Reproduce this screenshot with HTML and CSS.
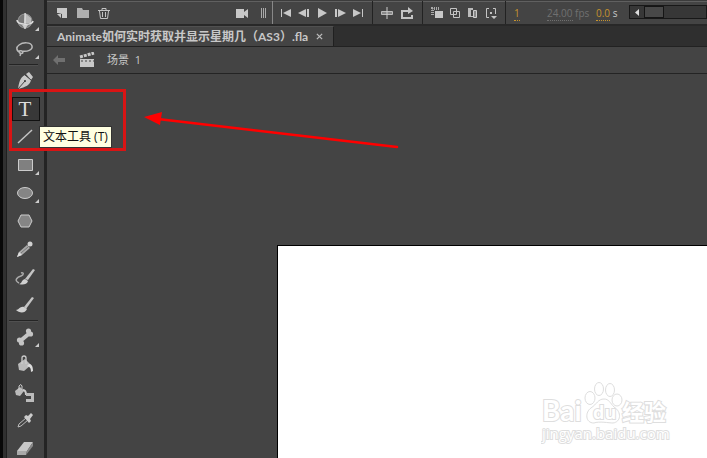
FILE: index.html
```html
<!DOCTYPE html>
<html lang="zh-CN">
<head>
<meta charset="utf-8">
<title>Animate</title>
<link rel="stylesheet" href="styles.css">
</head>
<body>
<div class="app">
  <nav class="tools" aria-label="工具">
    <button class="tool more" aria-label="3D 旋转工具"><svg viewBox="0 0 20 20"><circle cx="10" cy="10" r="7" fill="#777" stroke="#999"/><path d="M10 2l6 5v5H9z" fill="#bbb"/><path d="M10 2v16" stroke="#eee"/><path d="M2 9c0 5 16 6 16 1" fill="none" stroke="#ddd" stroke-width="1.500"/><path d="M7 14h6l-3 4z" fill="#ccc"/></svg></button>
    <button class="tool more" aria-label="套索工具"><svg viewBox="0 0 20 20" fill="none" stroke="#bbb" stroke-width="1.500"><path d="M5 13C1 12 1 8 4 6c4-3 12-3 13 1s-5 6-10 5c-3-1-4 1-2 2s4 0 2-2M5 14q1 1 0 3"/></svg></button>
    <hr>
    <button class="tool" aria-label="钢笔工具"><svg viewBox="0 0 20 20"><path d="M11 3l3-2 4 5-2 3zM10 4l6 5c-1 5-5 7-13 9C4 12 5 6 10 4z" fill="#c8c8c8"/><path d="M3 18l7-8M10 4l6 5" fill="none" stroke="#444"/><circle cx="10" cy="10" r="1" fill="#333"/></svg></button>
    <button class="tool selected" aria-label="文本工具 (T)"><span class="letter">T</span></button>
    <button class="tool" aria-label="线条工具"><svg viewBox="0 0 20 20"><path d="M3 16L17 3" stroke="#c4c4c4" stroke-width="1.500"/></svg></button>
    <button class="tool more" aria-label="矩形工具"><svg viewBox="0 0 20 20"><path d="M3.500 4.500h14v11h-14z" fill="#808080" stroke="#ccc"/></svg></button>
    <button class="tool more" aria-label="椭圆工具"><svg viewBox="0 0 20 20"><ellipse cx="10" cy="10" rx="7.500" ry="5.500" fill="#858585" stroke="#ccc"/></svg></button>
    <button class="tool" aria-label="多角星形工具"><svg viewBox="0 0 20 20"><path d="M6 4h8l3 6-3 6H6l-3-6z" fill="#858585" stroke="#ccc"/></svg></button>
    <button class="tool" aria-label="铅笔工具"><svg viewBox="0 0 20 20"><path d="M2 18l2-5 8-7 3 3-8 7z" fill="#aaa"/><path d="M2 18l2-5 3 3z" fill="#ddd"/><circle cx="15" cy="5" r="2.500" fill="#d0d0d0"/><path d="M6 14l7-6" stroke="#777"/></svg></button>
    <button class="tool" aria-label="画笔工具"><svg viewBox="0 0 20 20"><path d="M10 12l8-10 2 1-7 10z" fill="#c4c4c4"/><path d="M4 17c3 0 2-4 6-5l3 2c-1 4-6 4-9 3z" fill="#d0d0d0"/><path d="M4 16c-6-3-1-6 2-7s3-4 0-3" fill="none" stroke="#aaa" stroke-width="1.500"/></svg></button>
    <button class="tool" aria-label="刷子工具"><svg viewBox="0 0 20 20"><path d="M9 12l8-10 2 1-8 11z" fill="#c4c4c4"/><path d="M1 15c3 0 4-4 8-3l3 2c-2 5-8 4-11 1z" fill="#d0d0d0"/></svg></button>
    <hr>
    <button class="tool more" aria-label="骨骼工具"><svg viewBox="0 0 20 20"><path d="M4 15L16 5" stroke="#c4c4c4" stroke-width="4"/><g fill="#c4c4c4"><circle cx="4.500" cy="13" r="2.600"/><circle cx="6.500" cy="16" r="2.600"/><circle cx="13.500" cy="4" r="2.600"/><circle cx="15.500" cy="7" r="2.600"/></g></svg></button>
    <button class="tool" aria-label="颜料桶工具"><svg viewBox="0 0 20 20"><path d="M3 9l7-5 6 6-7 6-5-1z" fill="#bbb"/><path d="M14 9c3 0 4 3 4 7l-2 1c0-4-1-5-4-6z" fill="#ddd"/><path d="M7 9V3q0-2 2-2t2 2v6" fill="none" stroke="#ccc" stroke-width="1.300"/></svg></button>
    <button class="tool" aria-label="墨水瓶工具"><svg viewBox="0 0 20 20"><path d="M0 8l5-4 4 4-4 5-4-1z" fill="#bbb"/><path d="M8 7q3 0 3 5" fill="none" stroke="#ccc" stroke-width="2"/><path d="M4 7V3q2-3 3 0v4" fill="none" stroke="#ccc"/><path d="M11 10h8v9h-8v-3h5v-3h-5z" fill="#bbb"/></svg></button>
    <button class="tool" aria-label="滴管工具"><svg viewBox="0 0 20 20"><path d="M3 16l1-3 7-6 2 2-7 6z" fill="none" stroke="#bbb"/><path d="M9 6l2-2 2 1 3-3 2 2-3 4 1 2-2 2z" fill="#ccc"/></svg></button>
    <button class="tool" aria-label="橡皮擦工具"><svg viewBox="0 0 20 20"><path d="M2 12l7-9h9l-6 9z" fill="#c8c8c8"/><path d="M2 12h10l-1 4H2z" fill="#aaa"/><path d="M12 12l6-9v4l-7 9z" fill="#888"/></svg></button>
  </nav>
  <main class="workspace">
    <section class="timeline" aria-label="时间轴">
      <div class="group layers">
        <button aria-label="新建图层"><svg viewBox="0 0 14 14"><path d="M2 2h10v10H7V8L3 7H2z" fill="#c8c8c8"/><path d="M2 8l4 4V8z" fill="#c8c8c8"/></svg></button>
        <button aria-label="新建文件夹"><svg viewBox="0 0 14 14"><path d="M1 2h5l1 2h6v8H1z" fill="#b0b0b0"/></svg></button>
        <button aria-label="删除"><svg viewBox="0 0 14 14" fill="none" stroke="#c4c4c4"><path d="M1 4.500h12M5 4V2.500h4V4M2.500 5l1 7.500h7l1-7.500M5.500 6v5M8.500 6v5"/></svg></button>
      </div>
      <div class="group camera">
        <button aria-label="摄像头"><svg viewBox="0 0 14 14"><path d="M1 3h8v3l4-3v9L9 9v3H1z" fill="#c8c8c8"/></svg></button>
        <span class="grip"></span>
      </div>
      <div class="group playback">
        <button aria-label="第一帧"><svg viewBox="0 0 14 14" fill="#c8c8c8"><path d="M2 3h1v8H2zM4 7l8-4v8z"/></svg></button>
        <button aria-label="后退一帧"><svg viewBox="0 0 14 14" fill="#c8c8c8"><path d="M1 7l8-4v8zM10 3h2v8h-2z"/></svg></button>
        <button aria-label="播放"><svg viewBox="0 0 14 14" fill="#c8c8c8"><path d="M3 2l9 5-9 5z"/></svg></button>
        <button aria-label="前进一帧"><svg viewBox="0 0 14 14" fill="#c8c8c8"><path d="M2 3h2v8H2zM5 3l8 4-8 4z"/></svg></button>
        <button aria-label="最后一帧"><svg viewBox="0 0 14 14" fill="#c8c8c8"><path d="M2 3l8 4-8 4zM11 3h1v8h-1z"/></svg></button>
      </div>
      <div class="group loop">
        <button aria-label="帧居中"><svg viewBox="0 0 14 14"><path d="M1.500 5.500h11v3h-11z" fill="#888" stroke="#bbb"/><path d="M7 1v12" stroke="#ccc"/></svg></button>
        <button aria-label="循环"><svg viewBox="0 0 14 14"><path d="M1 4h7V1l5 4-5 3V6H3v5h8V9h2v4H1z" fill="#c4c4c4"/></svg></button>
      </div>
      <div class="group onion">
        <button aria-label="绘图纸外观"><svg viewBox="0 0 14 14"><path d="M2.500 9V2.500H9" fill="none" stroke="#aaa" stroke-width="3" stroke-dasharray="1 1"/><path d="M5 5h8v7H5z" fill="#c8c8c8"/></svg></button>
        <button aria-label="绘图纸外观轮廓"><svg viewBox="0 0 14 14" fill="none" stroke="#c4c4c4"><path d="M2.500 2.500h6v6h-6zM5.500 5.500h6v6h-6z"/></svg></button>
        <button aria-label="编辑多个帧"><svg viewBox="0 0 14 14"><path d="M2 2h5v2H5v6h2v1H2z" fill="#bbb"/><path d="M7.500 4.500h3v7h-3z" fill="#888" stroke="#ccc"/></svg></button>
        <button aria-label="修改标记"><svg viewBox="0 0 14 14"><path d="M5 2.500H2.500v9H5M9 2.500h2.500V8" fill="none" stroke="#c4c4c4"/><path d="M6 6h2v2H6zM7 10h6l-3 3z" fill="#c4c4c4"/></svg></button>
      </div>
      <div class="group readout"><a href="#" class="frame"><span class="value">1</span></a><span class="rate"><span class="value">24.00</span> fps</span><span class="time"><a href="#" class="value">0.0</a> s</span></div>
      <div class="scroll"><button aria-label="向左滚动"><svg viewBox="0 0 14 14"><path d="M9 3v7L5 6.500z" fill="#ddd"/></svg></button><span class="thumb"></span></div>
    </section>
    <div class="tabs"><div class="tab"><span>Animate如何实时获取并显示星期几（AS3）.fla</span><button aria-label="关闭"><svg viewBox="0 0 8 8"><path d="M1 1l6 6M7 1L1 7" stroke="#bbb" stroke-width="1.500"/></svg></button></div></div>
    <div class="scene">
      <button aria-label="返回"><svg viewBox="0 0 16 16"><path d="M2 8l5-5v3h7v4H7v3z" fill="#707070"/></svg></button>
      <svg class="clapper" viewBox="0 0 16 16"><path d="M1 7h14v8H1z" fill="#c8c8c8"/><path d="M1 5l14-4" stroke="#c8c8c8" stroke-width="3" stroke-dasharray="3 1"/><path d="M2 9h13" stroke="#444" stroke-dasharray="2 2"/></svg>
      <span>场景&nbsp; 1</span>
    </div>
    <div class="pasteboard">
      <div class="canvas"></div>
      <svg class="watermark" viewBox="0 0 130 64" role="img" aria-label="Baidu 经验">
        <g fill="#fff" stroke="#dedede" stroke-width="1">
          <text x="1" y="39" class="brand">Bai</text>
          <ellipse cx="49" cy="16" rx="5" ry="6.500"/><ellipse cx="58" cy="7" rx="4.500" ry="6.500"/><ellipse cx="69" cy="8" rx="4.500" ry="6.500"/><ellipse cx="76" cy="18" rx="5" ry="6"/>
          <path d="M63 17c5 0 6 4 10 8 8 5 7 15-1 16-4 0-14-2-19 0-9 0-9-11-3-15s7-9 13-9z"/>
          <text x="52" y="37" class="du">du</text>
          <text x="81" y="38" class="cjk">经验</text>
          <text x="1" y="57" class="url">jingyan.baidu.com</text>
        </g>
      </svg>
    </div>
  </main>
  <span class="tooltip" role="tooltip">文本工具 (T)</span>
  <div class="highlight"></div>
  <svg class="arrow" viewBox="0 0 256 40"><path d="M14 7l239 28" stroke="#f00" stroke-width="2.500" stroke-linecap="round"/><path d="M0 5l18-5-2 13z" fill="#f00"/></svg>
</div>
</body>
</html>
```
FILE: styles.css
```css
* { box-sizing: border-box; }
body {
  margin: 0;
  background: #444;
  color: #c8c8c8;
  font: 12px/16px "Open Sans", "Noto Sans CJK SC", sans-serif;
}
button {
  display: grid;
  place-items: center;
  flex: none;
  margin: 0;
  padding: 0;
  border: 0;
  background: none;
  color: inherit;
}
svg { display: block; }
.app {
  position: relative;
  display: flex;
  height: 100vh;
  overflow: hidden;
}
.tools {
  flex: none;
  width: 47px;
  padding: 7px 5px 0 5px;
  border-left: 3px solid #080808;
  border-right: 3px solid #242424;
  background: linear-gradient(90deg, #303030 3px, #202020 3px 4px, #444 4px);
  overflow: hidden;
}
.tool {
  position: relative;
  width: 34px;
  height: 28px;
}
.tool svg { width: 20px; height: 20px; }
.more::after {
  content: "";
  position: absolute;
  right: 3px;
  bottom: 4px;
  border: 2px solid;
  border-color: transparent #ccc #ccc transparent;
}
.selected::before {
  content: "";
  position: absolute;
  inset: 2px 2px 2px 4px;
  border: 1px solid #111;
  background: #383838;
}
.letter {
  position: relative;
  font: 21px/24px "Liberation Serif", serif;
  color: #ddd;
}
.tools hr {
  height: 2px;
  margin: 1px 1px;
  border: 0;
  border-top: 1px solid #242424;
  border-bottom: 1px solid #505050;
}
.workspace {
  display: flex;
  flex: 1;
  min-width: 0;
  flex-direction: column;
}
.timeline {
  display: flex;
  height: 26px;
  padding-top: 1px;
  border-bottom: 2px solid #282828;
  background: linear-gradient(#3c3c3c 1px, #606060 1px 2px, #444 2px);
}
.group {
  display: flex;
  flex: none;
  align-items: center;
}
.timeline svg { width: 14px; height: 14px; }
.layers {
  width: 186px;
  gap: 7px;
  padding-left: 8px;
}
.camera {
  width: 40px;
  gap: 12px;
  padding-left: 2px;
  border-right: 1px solid #888;
}
.grip {
  width: 6px;
  height: 10px;
  background: repeating-linear-gradient(90deg, #aaa 0 1px, #444 1px 2px);
}
.playback {
  width: 100px;
  gap: 4px;
  padding-left: 6px;
  border-right: 1px solid #222;
}
.loop {
  width: 50px;
  gap: 6px;
  padding-left: 7px;
  border-right: 1px solid #222;
}
.onion {
  width: 83px;
  gap: 4px;
  padding-left: 7px;
  border-right: 1px solid #222;
}
.readout {
  width: 123px;
  padding-left: 8px;
  font-size: 10px;
  line-height: 12px;
}
.value {
  border-bottom: 1px dotted;
  text-decoration: none;
  color: #c6932e;
}
.frame { width: 30px; text-decoration: none; }
.rate { width: 52px; padding-left: 3px; color: #707070; white-space: nowrap; }
.rate .value { color: #707070; }
.scroll {
  display: flex;
  flex: 1;
  height: 14px;
  margin-top: 4px;
  border: 1px solid #181818;
  background: #373737;
}
.scroll button { width: 14px; height: 12px; }
.thumb {
  width: 20px;
  border: 1px solid #151515;
  background: #484848;
}
.tabs {
  display: flex;
  height: 21px;
  border-bottom: 1px solid #222;
  background: #2f2f2f;
}
.tab {
  display: flex;
  align-items: center;
  gap: 8px;
  padding: 0 10px;
  border-top: 1px solid #505050;
  border-right: 1px solid #202020;
  background: #444;
  font-family: Lato, "Noto Sans CJK SC", sans-serif;
  font-weight: 700;
  white-space: nowrap;
}
.tab svg { width: 7px; height: 7px; }
.scene {
  display: flex;
  align-items: center;
  height: 27px;
  padding-left: 4px;
  gap: 12px;
  border-bottom: 1px solid #242424;
  font-size: 11px;
}
.scene svg { width: 16px; height: 16px; }
.pasteboard {
  position: relative;
  display: flex;
  flex: 1;
  padding: 171px 0 0 230px;
}
.canvas {
  flex: 1;
  border: 1px solid #000;
  border-width: 1px 0 0 1px;
  background: #fff;
}
.watermark {
  position: absolute;
  right: 36px;
  bottom: 12px;
  width: 130px;
  height: 64px;
}
.watermark text { paint-order: stroke; stroke-width: 2px; }
.brand { font: 700 28px Lato, sans-serif; }
.du { font: 700 18px "Open Sans", sans-serif; }
.cjk { font: 700 22px "Noto Sans CJK SC", sans-serif; }
.url { font: 15px "Open Sans", sans-serif; }
.tooltip {
  position: absolute;
  left: 39px;
  top: 126px;
  padding: 2px 3px;
  border: 1px solid #333;
  background: #ffffe1;
  color: #111;
  white-space: nowrap;
}
.highlight {
  position: absolute;
  left: 9px;
  top: 89px;
  width: 117px;
  height: 62px;
  border: 3px solid #d91414;
}
.arrow {
  position: absolute;
  left: 144px;
  top: 112px;
  width: 256px;
  height: 40px;
}
```
